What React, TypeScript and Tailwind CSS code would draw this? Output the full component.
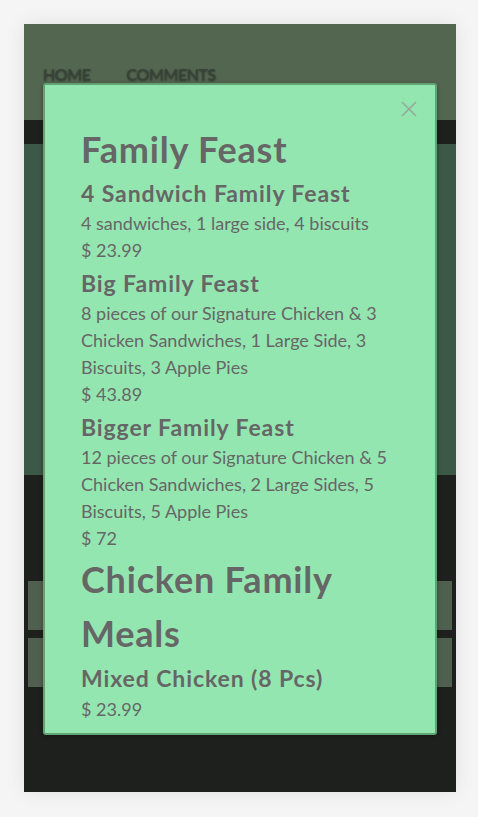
import React from "react";

const items = [
    {
        group: "Family Feast",
        meals: [
            {name: "4 Sandwich Family Feast", desc: "4 sandwiches, 1 large side, 4 biscuits", price: "23.99"},
            {
                name: "Big Family Feast",
                desc: "8 pieces of our Signature Chicken & 3 Chicken Sandwiches, 1 Large Side, 3 Biscuits, 3 Apple Pies",
                price: "43.89",
            },
            {
                name: "Bigger Family Feast",
                desc: "12 pieces of our Signature Chicken & 5 Chicken Sandwiches, 2 Large Sides, 5 Biscuits, 5 Apple Pies",
                price: "72",
            },
        ],
    },
    {
        group: "Chicken Family Meals",
        meals: [
            {name: "Mixed Chicken (8 Pcs)", desc: "", price: "23.99"},
        ],
    },
];

const font = {fontFamily: '"Segoe UI", Lato, "Open Sans", sans-serif'};

export default function App() {
    return (
        <div className="min-h-screen bg-[#f5f5f5] p-6" style={font}>
            <div className="relative flex flex-col w-[432px] h-[768px] overflow-hidden shadow-[0_0_18px_rgba(0,0,0,0.09)]">
                {/* header */}
                <div className="bg-[#536650] h-[96px] flex items-end gap-[36px] px-[19px] pb-[38px]">
                    <span className="text-[16px] leading-none tracking-[-0.4px] text-[#39433a] [text-shadow:0_1px_2px_rgba(0,0,0,0.6)]">HOME</span>
                    <span className="text-[16px] leading-none tracking-[-0.4px] text-[#39433a] [text-shadow:0_1px_2px_rgba(0,0,0,0.6)]">COMMENTS</span>
                </div>
                <div className="bg-[#1e201e] h-[24px]"/>
                <div className="bg-[#3c5846] h-[331px]"/>
                <div className="bg-[#1e201e] flex-1 flex flex-col gap-2 px-1 pt-[106px]">
                    <div className="h-[49px] bg-[#4f604f]"/>
                    <div className="h-[49px] bg-[#4f604f]"/>
                </div>

                {/* modal */}
                <div className="absolute left-[19px] top-[59px] w-[394px] h-[652px] bg-[#94e6b1] border-2 border-[#62a374] rounded-[3px] shadow-[0_1px_4px_rgba(0,0,0,0.3)] overflow-hidden">
                    <button className="absolute right-[16px] top-[14px] w-5 h-5 flex items-center justify-center">
                        <svg width="18" height="18" viewBox="0 0 18 18" fill="none" stroke="#93aa9a" strokeWidth="1.6">
                            <path d="M2 2 L16 16 M16 2 L2 16"/>
                        </svg>
                    </button>
                    <div className="px-[36px] pt-[37px] text-[#666666]">
                        {items.map((g) => (
                            <div key={g.group}>
                                <h2 className="text-[36px] leading-[54px] font-bold tracking-[0.8px]">{g.group}</h2>
                                {g.meals.map((m, i) => (
                                    <div key={m.name} className={i === 0 ? "" : "mt-[2px]"}>
                                        <h3 className={"text-[23px] font-bold tracking-[0.9px] " + (m.desc ? "leading-[34px]" : "leading-[36px]")}>{m.name}</h3>
                                        {m.desc && <p className="text-[18px] leading-[27px]">{m.desc}</p>}
                                        <p className="text-[18px] leading-[27px]">$ {m.price}</p>
                                    </div>
                                ))}
                            </div>
                        ))}
                    </div>
                </div>
            </div>
        </div>
    );
}
